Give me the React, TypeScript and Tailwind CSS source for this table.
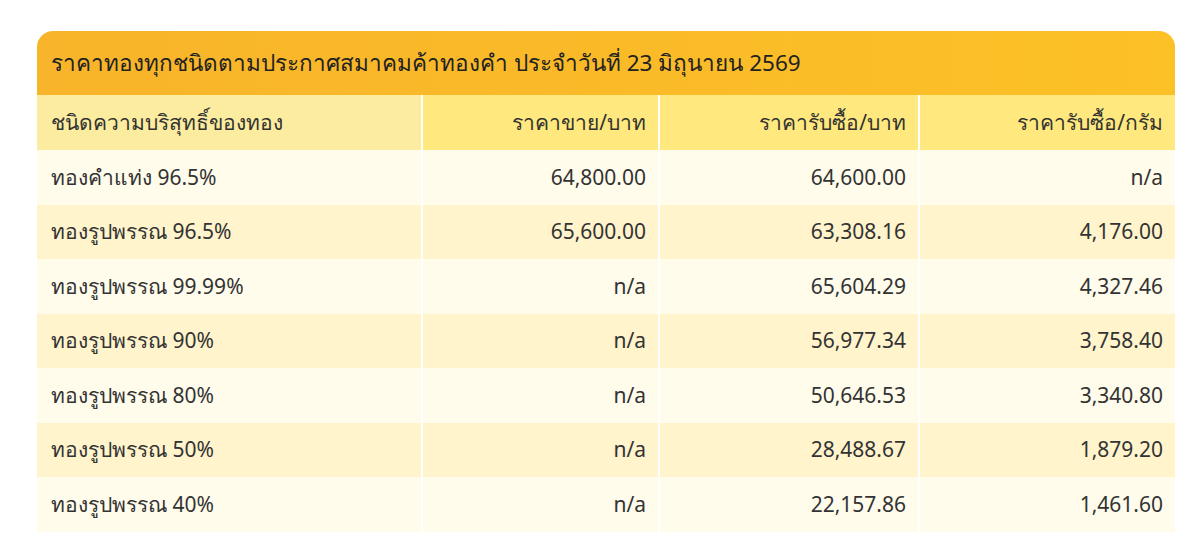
const rows: [string, string, string, string][] = [
  ["ทองคำแท่ง 96.5%", "64,800.00", "64,600.00", "n/a"],
  ["ทองรูปพรรณ 96.5%", "65,600.00", "63,308.16", "4,176.00"],
  ["ทองรูปพรรณ 99.99%", "n/a", "65,604.29", "4,327.46"],
  ["ทองรูปพรรณ 90%", "n/a", "56,977.34", "3,758.40"],
  ["ทองรูปพรรณ 80%", "n/a", "50,646.53", "3,340.80"],
  ["ทองรูปพรรณ 50%", "n/a", "28,488.67", "1,879.20"],
  ["ทองรูปพรรณ 40%", "n/a", "22,157.86", "1,461.60"],
];

export default function App() {
  return (
    <div className="min-h-[554px] bg-white pl-[37px] pt-[31px] font-['Noto_Sans',sans-serif] text-[#333]">
      <div className="w-[1138px] overflow-hidden rounded-t-2xl">
        <div className="flex h-[64px] items-center bg-gradient-to-r from-[#f8b42a] to-[#fcc126] pl-[14px] text-[22.5px] text-[#222]">
          ราคาทองทุกชนิดตามประกาศสมาคมค้าทองคำ ประจำวันที่ 23 มิถุนายน 2569
        </div>
        <div className="grid grid-cols-[384px_235px_258px_255px] gap-x-[2px] text-[21px]">
          <div className="flex h-[55px] items-center bg-[#fcec9f] pl-[14px]">ชนิดความบริสุทธิ์ของทอง</div>
          <div className="flex h-[55px] items-center justify-end bg-[#ffe97e] pr-[12px]">ราคาขาย/บาท</div>
          <div className="flex h-[55px] items-center justify-end bg-[#ffe97e] pr-[12px]">ราคารับซื้อ/บาท</div>
          <div className="flex h-[55px] items-center justify-end bg-[#ffe97e] pr-[12px]">ราคารับซื้อ/กรัม</div>
          {rows.map((r, i) => {
            const bg = i % 2 === 0 ? "bg-[#fffcec]" : "bg-[#fff4cc]";
            return r.map((c, j) => (
              <div
                key={`${i}-${j}`}
                className={`flex h-[54.5px] items-center ${bg} ${j === 0 ? "pl-[14px]" : "justify-end pr-[12px]"}`}
              >
                {c}
              </div>
            ));
          })}
        </div>
      </div>
    </div>
  );
}
